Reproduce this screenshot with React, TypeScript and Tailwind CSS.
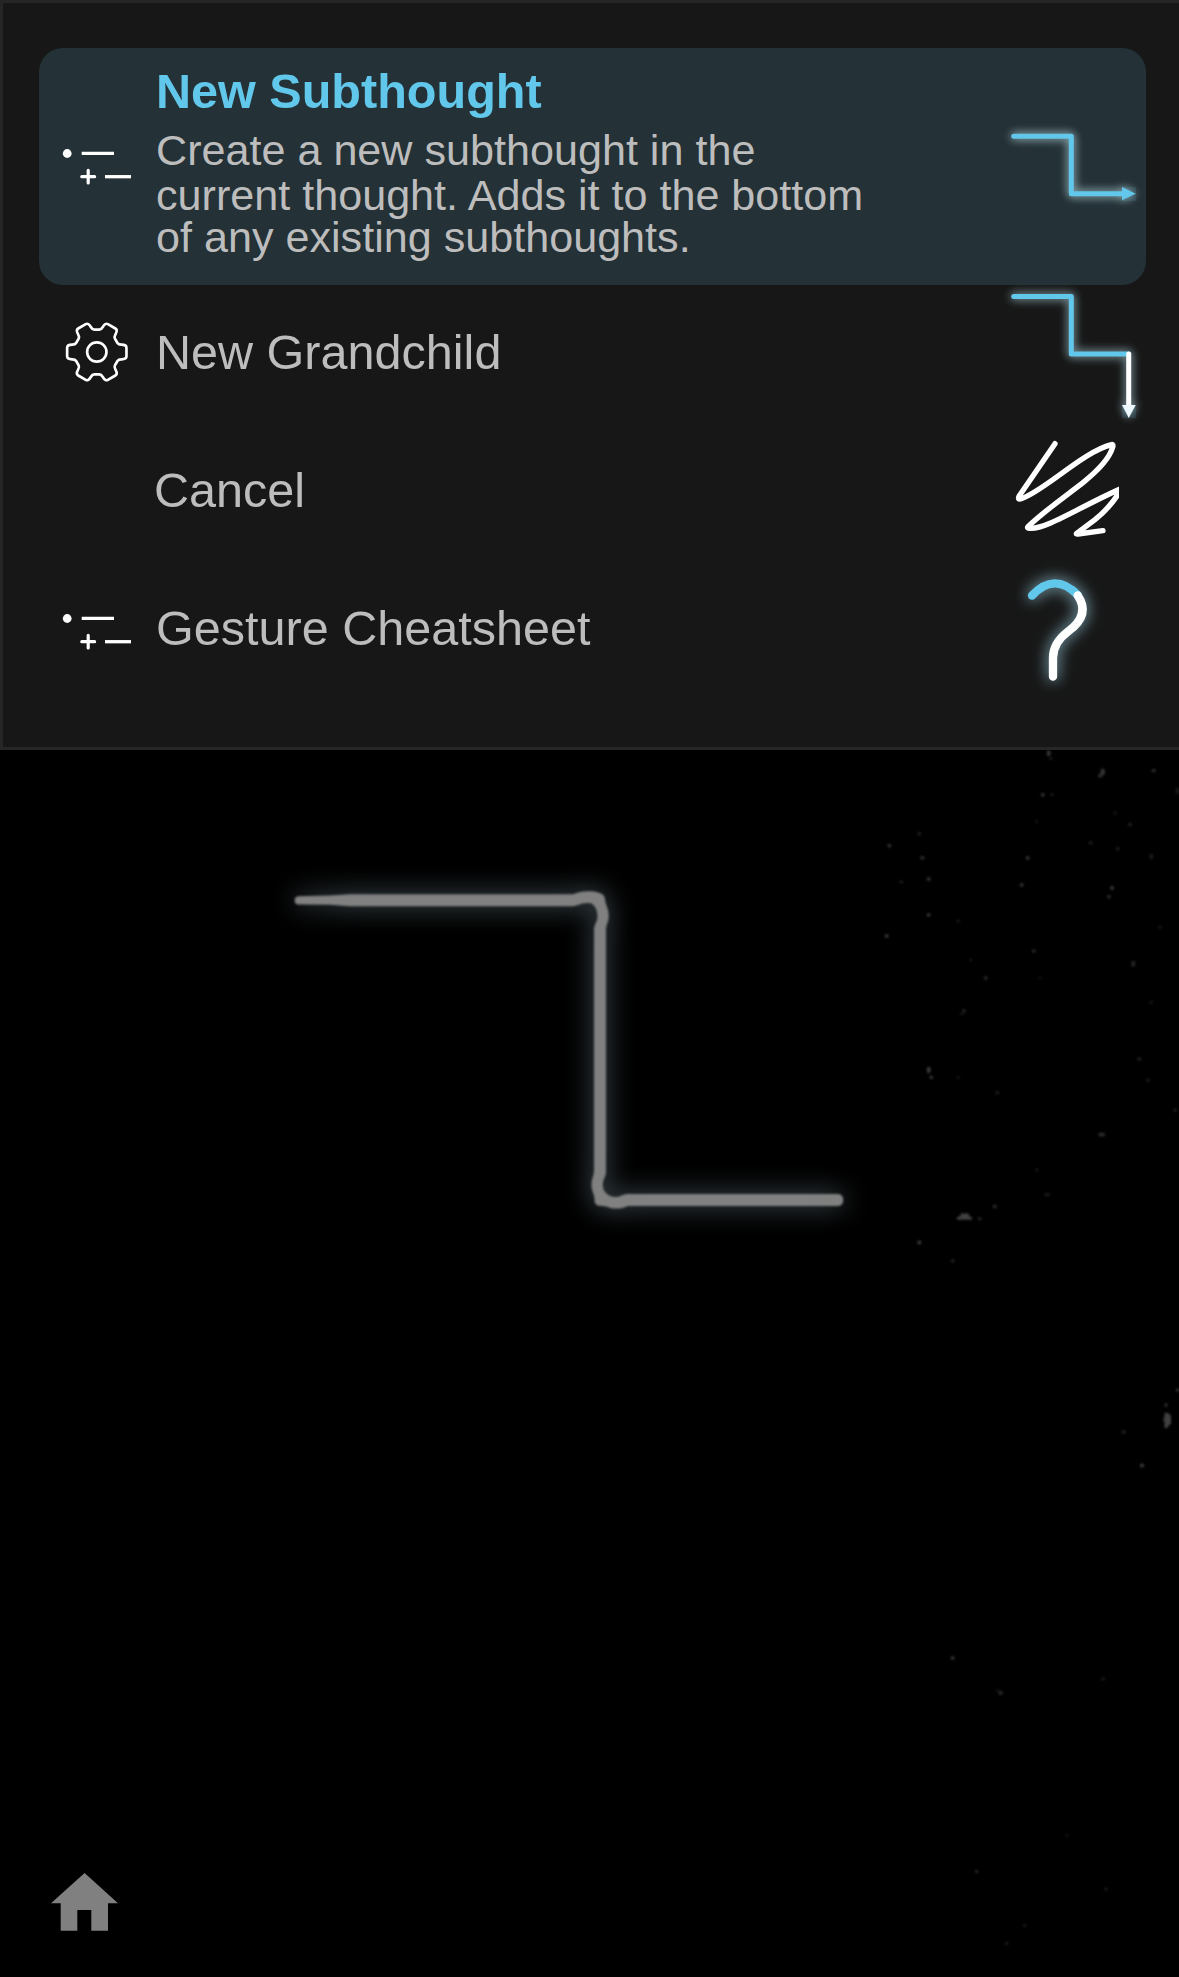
import type { ReactNode } from "react";

const BLUE = "#62c8eb";

function SubthoughtIcon({ className = "" }: { className?: string }) {
  return (
    <svg className={`h-[60px] w-[117px] shrink-0 ${className}`} viewBox="39 136.8 117 60">
      <circle cx="67.2" cy="153.3" r="4.4" fill="#fff" />
      <g stroke="#fff" fill="none">
        <path d="M81.7 153.2H114" strokeWidth="3.3" />
        <path d="M81.8 176.5H94.6M88.2 170.2V182.8" strokeWidth="3.2" strokeLinecap="round" />
        <path d="M105 176.5H131" strokeWidth="3.3" />
      </g>
    </svg>
  );
}

// One tooth of the gear, repeated every 60 degrees.
function gearPath() {
  const rot = (x: number, y: number, a: number) =>
    `${(x * Math.cos(a) - y * Math.sin(a)).toFixed(2)} ${(x * Math.sin(a) + y * Math.cos(a)).toFixed(2)}`;
  let d = "";
  for (let i = 0; i < 6; i++) {
    const a = (i * Math.PI) / 3;
    const p = (x: number, y: number) => rot(x, y, a);
    d += `${i ? "L" : "M"}${p(62, -27)}Q${p(65, -22)} ${p(74, -22)}Q${p(89, -22)} ${p(89, -13)}L${p(89, 13)}Q${p(89, 22)} ${p(74, 22)}Q${p(65, 22)} ${p(62, 27)}`;
  }
  return d + "Z";
}

function GearIcon() {
  return (
    <svg className="h-[72px] w-[117px] shrink-0" viewBox="39 316 117 72">
      <g transform="translate(96.8 352) scale(.3333)" fill="none" stroke="#fff" strokeWidth="8" strokeLinejoin="round">
        <path d={gearPath()} />
        <circle r="29" />
      </g>
    </svg>
  );
}

function SubthoughtGesture() {
  return (
    <svg className="h-[237px] w-[156px] shrink-0 overflow-visible" viewBox="990 48 156 237">
      <g
        className="[filter:drop-shadow(0_0_4px_rgba(190,225,230,0.65))_drop-shadow(0_0_5px_rgba(170,215,225,0.4))]"
        stroke={BLUE}
        strokeWidth="5"
        fill="none"
      >
        <path d="M1013.7 136.2H1071.3V193.7H1123" strokeLinecap="round" strokeLinejoin="round" />
        <path d="M1122 187L1135.7 193.7L1122 200.3Z" fill={BLUE} stroke="none" />
      </g>
      <rect x="1122" y="187" width="14" height="14" fill={BLUE} opacity=".1" />
    </svg>
  );
}

function GrandchildGesture() {
  return (
    <svg className="h-[134px] w-[156px] shrink-0 overflow-visible" viewBox="990 285 156 134">
      <g
        className="[filter:drop-shadow(0_0_4px_rgba(180,215,225,0.6))_drop-shadow(0_0_5px_rgba(160,205,220,0.4))]"
        strokeWidth="5"
        fill="none"
      >
        <path d="M1013.7 296.5H1071.3V354H1128.7" stroke={BLUE} strokeLinecap="round" strokeLinejoin="round" />
        <path d="M1128.7 354V406" stroke="#fff" strokeLinecap="round" />
        <path d="M1122 405H1135.7L1128.8 418Z" fill="#fff" />
      </g>
      <rect x="1122" y="405" width="14" height="13" fill={BLUE} opacity=".12" />
    </svg>
  );
}

function CancelGesture() {
  return (
    <svg className="h-[142px] w-[129px] shrink-0" viewBox="990 419 129 142">
      <path
        transform="translate(980 420) scale(.3333)"
        d="M225 71L117 229Q112 240 124 236C190 215 310 95 394 74Q401 72 398 82C388 117 350 155 310 187C260 226 190 275 144 320Q140 325 150 325C200 328 300 260 425 205C400 250 375 275 345 299L290 340Q287 343 294 342L369 332"
        fill="none"
        stroke="#fff"
        strokeWidth="16"
        strokeLinecap="round"
        strokeLinejoin="round"
      />
    </svg>
  );
}

function HelpGesture() {
  return (
    <svg className="h-[134px] w-[156px] shrink-0 overflow-visible" viewBox="990 561 156 134">
      <g className="[filter:drop-shadow(0_0_7px_rgba(150,200,215,0.65))_drop-shadow(0_0_8px_rgba(140,190,205,0.35))]">
        <g transform="translate(980 420) scale(.3333)" fill="none" strokeWidth="25" strokeLinecap="round">
          <path d="M156 527C200 478 248 478 293 525" stroke={BLUE} />
          <path d="M293 526C315 558 317 595 266 633C235 656 219 682 219 714V770" stroke="#fff" />
        </g>
      </g>
    </svg>
  );
}

function Label({ children, className = "" }: { children: ReactNode; className?: string }) {
  return <span className={`flex-1 text-[48.55px] leading-[56px] ${className}`}>{children}</span>;
}

// x, y, rx, ry, grey level
const specks: [number, number, number, number, number][] = [
  [1048.7, 753.3, 2, 3, 52], [1051, 758.5, 2, 1.5, 26], [1102.7, 772, 2.2, 3.5, 52], [1100, 775.8, 2, 2, 48],
  [1153.7, 770.5, 2.2, 1.6, 48], [1042.7, 794.7, 2, 2, 48], [1052, 794.7, 1.8, 1.8, 24], [1115, 813, 1.8, 1.8, 22],
  [1130, 824.5, 2, 1.8, 34], [1036.7, 821.7, 1.6, 1.6, 20], [1090.7, 842.8, 2, 1.6, 30], [1117.7, 848.7, 2, 1.8, 30],
  [1151.3, 856.4, 1.8, 3, 26], [919.3, 833.7, 1.8, 1.8, 34], [889.3, 845.6, 2, 1.9, 46], [922.3, 857.9, 2.2, 1.8, 44],
  [928.7, 878.9, 2, 2, 50], [901.3, 882, 1.8, 1.8, 28], [1027.7, 857.9, 2, 1.9, 50], [1021.7, 884.9, 2, 1.9, 50],
  [1112, 888, 2, 2, 54], [1109, 896.8, 2, 1.8, 46], [928.7, 915, 2, 2, 48], [958.3, 921, 1.8, 1.8, 22],
  [886.7, 936, 1.8, 2, 58], [1160, 927, 1.8, 1.8, 24], [1033.7, 951, 2, 1.8, 42], [970.7, 960, 1.8, 1.8, 22],
  [985.7, 978, 1.9, 1.9, 38], [1040, 978, 1.8, 1.5, 18], [1133.3, 963.8, 2, 3, 38], [964, 1011, 2, 2, 32],
  [961.7, 1014, 2, 1.6, 22], [1151, 1002.4, 2, 1.6, 22], [928.7, 1070, 2, 3.2, 56], [931.3, 1077.4, 2, 1.8, 48],
  [958.3, 1077.4, 1.6, 1.6, 20], [997.3, 1092.5, 2, 1.6, 32], [1139.3, 1059, 2, 1.6, 40], [1148.3, 1080, 2, 1.6, 32],
  [1175, 1110, 2, 1.8, 28], [1101.7, 1134.6, 3.5, 1.8, 46], [1036.7, 1170, 1.8, 1.8, 24], [1047, 1194.6, 3, 1.5, 26],
  [994.7, 1206.5, 2, 1.8, 46], [979.7, 1218.8, 2, 1.6, 36], [919.3, 1242.6, 2, 2, 58], [952.7, 1261, 2, 1.8, 34],
  [1177.3, 791, 1.6, 3.5, 26], [1166, 1405, 1.8, 1.8, 46], [1177.7, 1390, 1.8, 1.6, 56], [1123.7, 1432, 2, 1.8, 36],
  [1142, 1465.5, 2.2, 2, 56], [952.7, 1658, 2, 2, 50], [1000.7, 1693, 2, 2.2, 40], [998, 1691, 2, 1.4, 22],
  [1103, 1679, 2, 1.6, 30], [1067, 1835.4, 2, 1.4, 18], [976.7, 1871.6, 2, 1.6, 36], [1106, 1889, 2, 1.6, 26],
  [1024.7, 1925.5, 2, 1.6, 26], [1006.7, 1943.6, 2, 1.6, 26],
];

const TRACE =
  "M298 896.3L330 895.6L350 894.3H573C580 891.5 586 890.6 594 891.6C600 893.5 604 893 605 899C605 904 609 909 608.7 916C609 922 606 924 606 930V1172C606 1177 602 1180 603 1187C603.5 1192 609 1197 616 1197C621 1197 622 1194 628 1194H838C845 1194 845 1206 838 1206H628C622 1209 613 1209.5 608 1207C602 1205 595 1208 594.5 1200C595 1195 591.5 1192 591.5 1185C591.5 1178 594 1176 594 1170V930C594 924 597.5 922 597.5 916C597 909 595 906 591 903.3C583 901.5 577 906.3 572 906.3H350L330 904.8L298 904.5C293.5 904 293.5 897 298 896.3Z";

function GestureCanvas() {
  return (
    <svg className="absolute inset-0 h-[1227px] w-full" viewBox="0 750 1179 1227">
      <g className="blur-[0.9px]">
        {specks.map(([x, y, rx, ry, v], i) => (
          <ellipse key={i} cx={x} cy={y} rx={rx} ry={ry} fill={`rgb(${v},${v},${v})`} />
        ))}
        <path d="M957 1219.8V1217L960.5 1216V1213.5H969V1216L972 1217.5V1219.8Z" fill="#404040" />
        <path d="M1164.5 1413H1168L1171 1415.5V1424L1168 1426V1428H1164.5V1422L1163.5 1421V1418L1164.5 1417Z" fill="#404040" />
      </g>
      <g className="[filter:drop-shadow(0_0_13px_rgba(92,112,120,0.85))]">
        <path d={TRACE} fill="#808080" className="blur-[0.8px]" />
      </g>
    </svg>
  );
}

export default function App() {
  return (
    <div className="flex h-[1977px] w-[1179px] flex-col overflow-hidden bg-black font-['Liberation_Sans',Arial,sans-serif] text-[#bdbdbd]">
      <section className="flex h-[750px] shrink-0 flex-col border-y-[3px] border-l-[3px] border-[#262626] bg-[#171717] pt-[45px] pr-[33px] pl-9">
        <div className="flex h-[237px] shrink-0 items-center rounded-3xl bg-[#243136]">
          <SubthoughtIcon />
          <div className="flex flex-1 flex-col self-stretch pt-[15px] whitespace-nowrap">
            <h1 className="h-[65px] text-[48.55px] leading-[56px] font-bold text-[#62c8eb]">New Subthought</h1>
            <p className="text-[43.13px] leading-[44px]">
              <span className="block h-[45px]">Create a new subthought in the</span>
              <span className="block h-[42px]">current thought. Adds it to the bottom</span>
              <span className="block h-[44px]">of any existing subthoughts.</span>
            </p>
          </div>
          <SubthoughtGesture />
        </div>
        <div className="flex h-[134px] shrink-0 items-center">
          <GearIcon />
          <Label>New Grandchild</Label>
          <GrandchildGesture />
        </div>
        <div className="flex h-[142px] shrink-0 items-center pr-[27px]">
          <Label className="pl-[115px]">Cancel</Label>
          <CancelGesture />
        </div>
        <div className="flex h-[134px] shrink-0 items-center">
          <SubthoughtIcon className="mt-[7px]" />
          <Label>Gesture Cheatsheet</Label>
          <HelpGesture />
        </div>
      </section>
      <main className="relative flex flex-1 items-end pb-[46px] pl-[51px]">
        <GestureCanvas />
        <svg className="h-[58px] w-[67px]" viewBox="51 1873 67 58" role="img" aria-label="Home">
          <path d="M84.6 1873L118 1903.3H108V1930.7H91.3V1910H77.3V1930.7H60.7V1903.3H51Z" fill="#808080" />
        </svg>
      </main>
    </div>
  );
}
